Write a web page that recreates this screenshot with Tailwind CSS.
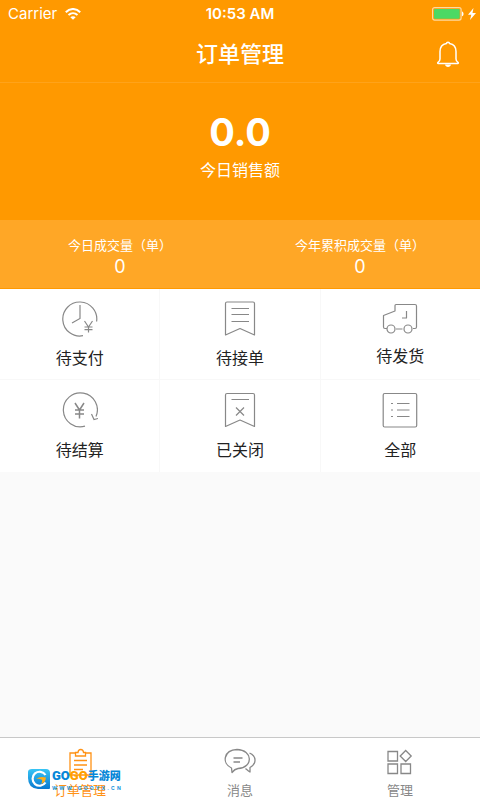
<!DOCTYPE html>
<html lang="zh-CN">
<head>
<meta charset="utf-8">
<meta name="viewport" content="width=device-width, initial-scale=1">
<title>订单管理</title>
<script src="https://cdn.jsdelivr.net/npm/@tailwindcss/browser@4"></script>
</head>
<body class="flex min-h-screen flex-col bg-[#fafafa] font-['Inter','Noto_Sans_CJK_SC',sans-serif] text-[#222]">
<header class="border-b border-[#ffa31a] bg-[#ff9900] text-white">
  <div class="grid h-7 grid-cols-3 items-center px-2 text-[15px] leading-5">
    <div class="flex items-center gap-2">
      <span>Carrier</span>
      <svg class="h-3 w-4" viewBox="0 0 16 12" fill="none" stroke="#fff" stroke-width="2" aria-hidden="true"><path d="M.8 4.2C5-.1 11-.1 15.2 4.2M3.500 7c2.700-2.500 6.300-2.500 9 0"/><path d="M8 11.800 5.300 9.200c1.500-1.300 3.900-1.300 5.400 0z" fill="#fff" stroke="none"/></svg>
    </div>
    <span class="text-center text-[15px] font-semibold whitespace-nowrap">10:53 AM</span>
    <div class="-mr-1 flex items-center justify-end gap-1">
      <svg class="h-[14px] w-8" viewBox="0 0 32 14" aria-hidden="true"><rect x=".6" y=".6" width="28.500" height="12.500" rx="2" fill="none" stroke="#ffd9a0" stroke-width="1.200"/><rect x="2" y="2" width="25.700" height="9.700" rx="1" fill="#4cd964"/><path d="M30 4.500c2 .6 2 4.200 0 4.800z" fill="#fff"/></svg>
      <svg class="h-3 w-2" viewBox="0 0 8 12" fill="#fff" aria-hidden="true"><path d="M5.500 0 0 6.800h3.300L2 12l6-7H4.500z"/></svg>
    </div>
  </div>
  <div class="grid h-[54px] grid-cols-[1fr_auto_1fr] items-center px-5 pb-[2px]">
    <h1 class="col-start-2 text-[22px] leading-8 font-medium">订单管理</h1>
    <button class="justify-self-end" aria-label="通知">
      <svg class="h-[27px] w-6" viewBox="0 0 24 27" fill="none" stroke="#fff" stroke-width="1.500" stroke-linejoin="round" aria-hidden="true"><path d="M10.500 2.500c0-1.800 3-1.800 3 0 4.300.8 6.500 4 6.500 8v7.500c0 1.800.5 2.500 2 3.300.6.500.4 1.200-.3 1.200H2.300c-.7 0-.9-.7-.3-1.200 1.500-.8 2-1.500 2-3.300v-7.500c0-4 2.200-7.200 6.500-8z"/><path d="M9 23.500h6c-.3 3.300-5.700 3.300-6 0z" fill="#fff" stroke="none"/></svg>
    </button>
  </div>
</header>
<main class="flex-1">
  <section class="flex h-[137px] flex-col items-center bg-[#ff9900] pt-[27px] text-white">
    <strong class="text-[38px] leading-[44px] font-bold">0.0</strong>
    <span class="mt-1 text-[16px] leading-6">今日销售额</span>
  </section>
  <section class="grid h-[69px] grid-cols-2 border-b border-[#ff9900] bg-[#ffa726] pt-[15px] text-center text-white">
    <div><p class="text-[13px] leading-5">今日成交量（单）</p><p class="text-[18px] leading-6">0</p></div>
    <div><p class="text-[13px] leading-5">今年累积成交量（单）</p><p class="text-[18px] leading-6">0</p></div>
  </section>
  <nav class="grid grid-cols-3 gap-x-px bg-[#f8f8f8] text-center text-[16px] leading-6" aria-label="订单状态">
    <a href="#" class="flex h-[91px] flex-col items-center gap-[9px] border-b border-[#f8f8f8] bg-white pt-3">
      <svg class="h-9 w-9" viewBox="0 0 36 36" fill="none" stroke="#888" stroke-width="1.200" aria-hidden="true"><path d="M34.600 20.500A17 17 0 1 0 21 34.700M18 4v13.500l-8 4.500"/><path d="m22.500 20 4 6 4-6M26.500 26v5.500M22.500 26h8M22.500 28.700h8"/></svg>
      <span>待支付</span>
    </a>
    <a href="#" class="flex h-[91px] flex-col items-center gap-[9px] border-b border-[#f8f8f8] bg-white pt-3">
      <svg class="h-9 w-9" viewBox="0 0 36 36" fill="none" stroke="#888" stroke-width="1.200" stroke-linejoin="round" aria-hidden="true"><path d="M3.500 34V2.500q0-1.500 1.500-1.500h26q1.500 0 1.500 1.500V34L18 27.500z"/><path d="M9.500 7.500h17.500M9.500 13.500h17.500M9.500 20.500h17.500"/></svg>
      <span>待接单</span>
    </a>
    <a href="#" class="flex h-[91px] flex-col items-center gap-[7px] border-b border-[#f8f8f8] bg-white pt-3">
      <svg class="h-9 w-9" viewBox="0 0 36 36" fill="none" stroke="#888" stroke-width="1.200" stroke-linejoin="round" aria-hidden="true"><path d="M5 27.500H3q-1.500 0-1.500-1.500V14.500L13 10V4.500q0-1 1-1h19q1.500 0 1.500 1.500v21q0 1.500-1.500 1.500h-2M14 28h6.500M24.500 10v7H20"/><circle cx="9" cy="28" r="4"/><circle cx="26" cy="28" r="4"/></svg>
      <span>待发货</span>
    </a>
    <a href="#" class="flex h-[92px] flex-col items-center gap-[10px] bg-white pt-3">
      <svg class="h-9 w-9" viewBox="0 0 36 36" fill="none" stroke="#888" stroke-width="1.200" aria-hidden="true"><path d="M23 34.200A17 17 0 1 1 34 24.500M29.500 22l2.500 5.500 6-1.500"/><path d="m13 11 4.500 7 4.500-7M17.500 18v8.500M13 18h9M13 22h9" stroke-width="1.500"/></svg>
      <span>待结算</span>
    </a>
    <a href="#" class="flex h-[92px] flex-col items-center gap-[10px] bg-white pt-3">
      <svg class="h-9 w-9" viewBox="0 0 36 36" fill="none" stroke="#888" stroke-width="1.200" stroke-linejoin="round" aria-hidden="true"><path d="M3.500 34.500V3q0-1.500 1.500-1.500h26q1.500 0 1.500 1.500v31.500L18 28z"/><path d="M9.500 7.500h17.500M14 15.500l8 8M22 15.500l-8 8"/></svg>
      <span>已关闭</span>
    </a>
    <a href="#" class="flex h-[92px] flex-col items-center gap-[10px] bg-white pt-3">
      <svg class="h-9 w-9" viewBox="0 0 36 36" fill="none" stroke="#888" stroke-width="1.200" aria-hidden="true"><rect x="1.200" y="1.500" width="33.500" height="33.500" rx="1.500"/><path d="M9 11.500h2M15 11.500h12.500M9 18h2M15 18h12.500M9 24.500h2M15 24.500h12.500"/></svg>
      <span>全部</span>
    </a>
  </nav>
</main>
<footer class="relative border-t border-[#c8c8c8] bg-white">
  <nav class="grid h-[62px] grid-cols-3 text-[13px] leading-4 text-[#888]" aria-label="主导航">
    <a href="#" class="flex flex-col items-center gap-[6px] pt-[10px] text-[#ff9215]" aria-current="page">
      <svg class="h-7 w-7" viewBox="0 0 28 28" fill="none" stroke="currentColor" stroke-width="1.300" aria-hidden="true"><path d="M9.500 5H4v22h21V5h-5.500M9.500 8V4.500H12c.3-4 5.200-4 5.500 0h2V8zM8 12.500h13M8 17h13M8 21.500h9"/></svg>
      <span>订单管理</span>
    </a>
    <a href="#" class="flex flex-col items-center gap-[6px] pt-[10px]">
      <svg class="h-7 w-8" viewBox="0 0 32 28" fill="none" stroke="currentColor" stroke-width="1.300" stroke-linejoin="round" aria-hidden="true"><path d="M7.500 20C-2.500 15.500-.5 2 13 1.500c16 .5 16.500 18 1 19-2.500.4-4.500 2-6 4z"/><path d="M25.500 5c7 3 7.500 10.500.5 14.500v4.500c-2-1.300-3-2.300-4.500-3.500M9.500 10h9M9.500 14h6.500"/></svg>
      <span>消息</span>
    </a>
    <a href="#" class="flex flex-col items-center gap-[6px] pt-[10px]">
      <svg class="h-7 w-7" viewBox="0 0 28 28" fill="none" stroke="currentColor" stroke-width="1.300" aria-hidden="true"><path d="M2 3.500h9.500V13H2zM2 16h9.500v9.500H2zM15 16h9.500v9.500H15zM19.700 2.500l5.500 5.500-5.500 5.500L14.200 8z"/></svg>
      <span>管理</span>
    </a>
  </nav>
  <div class="absolute top-[29px] left-7 flex items-start gap-[2px] whitespace-nowrap">
    <svg class="h-[22px] w-[22px]" viewBox="0 0 22 22" aria-hidden="true"><defs><linearGradient id="blue" x1="0" y1="0" x2="0" y2="1"><stop stop-color="#38c5f5"/><stop offset="1" stop-color="#0878d0"/></linearGradient></defs><path d="M4 2h14q4 0 4 4v15q0 1-1 1H10Q0 21 0 11V5q0-3 4-3z" fill="url(#blue)"/><path d="M17.500 8a7 7 0 1 0 0 7.500" fill="none" stroke="#fff" stroke-width="2.200"/><path d="M8 12q4-3 10-1.500-.5 5-5 6.500 2-3 .5-4.500-2.500-1-5.500-.5z" fill="#ffad18"/></svg>
    <div class="font-bold">
      <div class="flex items-center leading-[18px]"><span class="font-['Roboto'] text-[13px] font-black text-[#0787d8]">GO</span><span class="font-['Roboto'] text-[13px] font-black text-[#ffa000]">GO</span><span class="text-[11px] font-black text-[#0787d8]">手游网</span></div>
      <div class="flex justify-between text-[5px] leading-[6px] text-[#1593dc]"><span>W</span><span>W</span><span>W</span><span>.</span><span>G</span><span>O</span><span>O</span><span>Y</span><span>X</span><span>.</span><span>C</span><span>N</span></div>
    </div>
  </div>
</footer>
</body>
</html>
